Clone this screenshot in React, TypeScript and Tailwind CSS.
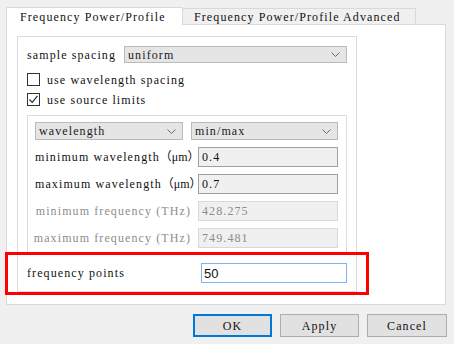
import React from 'react';

const serif = "font-[family-name:Liberation_Serif,Noto_Sans_CJK_SC,serif] text-[12px] tracking-[1.1px] leading-none";

function Chevron() {
  return (
    <svg width="9" height="5" viewBox="0 0 9 5">
      <path d="M0.5 0.5 L4.5 4.5 L8.5 0.5" fill="none" stroke="#6b6b6b" strokeWidth="1" />
    </svg>
  );
}

function Combo({ value, className }: { value: string; className: string }) {
  return (
    <div className={`flex items-center justify-between pl-[3px] pr-[6px] bg-[#e5e5e5] border border-[#bababa] text-[#1a1a1a] ${className}`}>
      <span>{value}</span>
      <Chevron />
    </div>
  );
}

function CheckRow({ label, checked }: { label: string; checked?: boolean }) {
  return (
    <div className="flex items-center h-[13px] mt-[7px] first:mt-[10px]">
      <div className="w-[13px] h-[13px] border border-[#333333] bg-white flex items-center justify-center">
        {checked && (
          <svg width="11" height="11" viewBox="0 0 11 11">
            <path d="M1.5 5.5 L4.2 8.3 L9.5 1.8" fill="none" stroke="#222" strokeWidth="1.1" />
          </svg>
        )}
      </div>
      <span className="ml-[7px] text-[#111] whitespace-nowrap">{label}</span>
    </div>
  );
}

function Input({ value, disabled }: { value: string; disabled?: boolean }) {
  return (
    <div
      className={`w-[140px] h-[20px] flex items-center pl-[3px] bg-[#f0f0f0] border ${
        disabled ? 'border-[#d9d9d9] text-[#8c8c8c]' : 'border-[#a0a0a0] text-[#111]'
      }`}
    >
      {value}
    </div>
  );
}

function WavelengthRow({ label, value }: { label: string; value: string }) {
  return (
    <div className="flex items-center h-[20px] mt-[7px]">
      <div className="w-[163px] whitespace-nowrap text-[#111]">
        {label}
        <span className="tracking-[0px]">（μm）</span>
      </div>
      <Input value={value} />
    </div>
  );
}

function FrequencyRow({ label, value }: { label: string; value: string }) {
  return (
    <div className="flex items-center h-[20px] mt-[7px]">
      <div className="w-[156px] flex justify-end whitespace-nowrap text-[#8c8c8c]">{label}</div>
      <div className="ml-[7px]">
        <Input value={value} disabled />
      </div>
    </div>
  );
}

export default function App() {
  return (
    <div className={`relative w-[454px] h-[344px] bg-[#f0f0f0] overflow-hidden ${serif}`}>
      {/* tabs */}
      <div className="flex items-end pl-[6px] pt-[7px] h-[24px]">
        <div className="relative z-10 -mb-px w-[177px] h-[18px] bg-white border-t border-l border-r border-[#d9d9d9] flex items-center pl-[13px] text-[#111] whitespace-nowrap">
          Frequency Power/Profile
        </div>
        <div className="w-[233px] h-[16px] bg-[#f0f0f0] border-t border-r border-[#d9d9d9] flex items-center pl-[11px] text-[#111] whitespace-nowrap">
          Frequency Power/Profile Advanced
        </div>
      </div>

      {/* page */}
      <div className="ml-[6px] w-[440px] h-[281px] bg-white border border-[#d9d9d9]">
        <div className="mt-[11px] ml-[10px] w-[340px] h-[256px] border border-[#dcdcdc] pl-[9px] flex flex-col">
          <div className="flex items-center h-[17px] mt-[9px]">
            <div className="w-[97px] text-[#111] whitespace-nowrap">sample spacing</div>
            <Combo value="uniform" className="w-[223px] h-[17px]" />
          </div>
          <div className="flex flex-col">
            <CheckRow label="use wavelength spacing" />
            <CheckRow label="use source limits" checked />
          </div>

          <div className="mt-[9px] w-[320px] h-[138px] border border-[#dcdcdc] pl-[7px] pt-[6px] flex flex-col">
            <div className="flex items-center gap-[8px] h-[18px]">
              <Combo value="wavelength" className="w-[148px] h-[18px]" />
              <Combo value="min/max" className="w-[147px] h-[18px]" />
            </div>
            <WavelengthRow label="minimum wavelength" value="0.4" />
            <WavelengthRow label="maximum wavelength" value="0.7" />
            <FrequencyRow label="minimum frequency (THz)" value="428.275" />
            <FrequencyRow label="maximum frequency (THz)" value="749.481" />
          </div>

          <div className="flex items-center h-[20px] mt-[10px]">
            <div className="w-[174px] text-[#111] whitespace-nowrap">frequency points</div>
            <div className="w-[146px] h-[20px] flex items-center pl-[2px] bg-white border border-[#7eb4ea] font-[family-name:Liberation_Sans,Arimo,sans-serif] text-[13px] tracking-normal text-[#111]">
              50
            </div>
          </div>
        </div>
      </div>

      {/* dialog buttons */}
      <div className="flex justify-end gap-[8px] pr-[7px] mt-[9px]">
        <button className="w-[79px] h-[23px] bg-[#e1e1e1] border border-[#0078d7] shadow-[inset_0_0_0_1px_#0078d7] text-[#111]">OK</button>
        <button className="w-[79px] h-[23px] bg-[#e1e1e1] border border-[#adadad] text-[#111]">Apply</button>
        <button className="w-[80px] h-[23px] bg-[#e1e1e1] border border-[#adadad] text-[#111]">Cancel</button>
      </div>

      {/* annotation */}
      <div className="absolute left-[5px] top-[252px] w-[364px] h-[43px] border-[3px] border-[#ff0000]" />
    </div>
  );
}
